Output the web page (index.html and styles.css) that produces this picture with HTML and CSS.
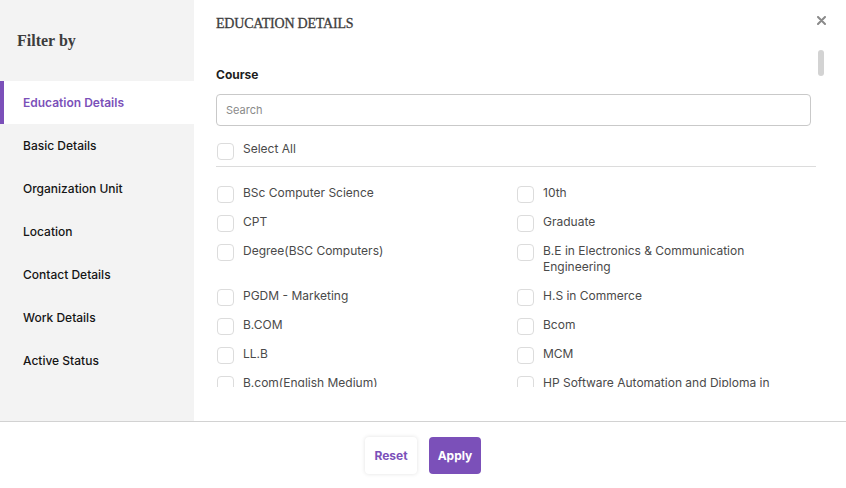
FILE: index.html
```html
<!DOCTYPE html>
<html>
<head>
<meta charset="utf-8">
<link rel="stylesheet" href="styles.css">
</head>
<body>
<div class="modal">
  <div class="top">
    <aside class="sidebar">
      <h2 class="filter-title">Filter by</h2>
      <ul class="nav">
        <li class="nav-item active">Education Details</li>
        <li class="nav-item">Basic Details</li>
        <li class="nav-item">Organization Unit</li>
        <li class="nav-item">Location</li>
        <li class="nav-item">Contact Details</li>
        <li class="nav-item">Work Details</li>
        <li class="nav-item">Active Status</li>
      </ul>
    </aside>
    <main class="main">
      <div class="main-head">
        <h1 class="section-title">EDUCATION DETAILS</h1>
        <button class="close" aria-label="Close">
          <svg width="9" height="9" viewBox="0 0 9 9"><path d="M1 1 L8 8 M8 1 L1 8" stroke="#8a8a8a" stroke-width="2" stroke-linecap="round"/></svg>
        </button>
      </div>
      <div class="scroll">
        <div class="field-label">Course</div>
        <input class="search" type="text" placeholder="Search">
        <label class="check-row select-all"><span class="box"></span><span class="label">Select All</span></label>
        <div class="options">
          <label class="check-row"><span class="box"></span><span class="label">BSc Computer Science</span></label>
          <label class="check-row"><span class="box"></span><span class="label">10th</span></label>
          <label class="check-row"><span class="box"></span><span class="label">CPT</span></label>
          <label class="check-row"><span class="box"></span><span class="label">Graduate</span></label>
          <label class="check-row"><span class="box"></span><span class="label">Degree(BSC Computers)</span></label>
          <label class="check-row"><span class="box"></span><span class="label">B.E in Electronics &amp; Communication Engineering</span></label>
          <label class="check-row"><span class="box"></span><span class="label">PGDM - Marketing</span></label>
          <label class="check-row"><span class="box"></span><span class="label">H.S in Commerce</span></label>
          <label class="check-row"><span class="box"></span><span class="label">B.COM</span></label>
          <label class="check-row"><span class="box"></span><span class="label">Bcom</span></label>
          <label class="check-row"><span class="box"></span><span class="label">LL.B</span></label>
          <label class="check-row"><span class="box"></span><span class="label">MCM</span></label>
          <label class="check-row"><span class="box"></span><span class="label">B.com(English Medium)</span></label>
          <label class="check-row"><span class="box"></span><span class="label">HP Software Automation and Diploma in Testing</span></label>
        </div>
      </div>
      <div class="thumb"></div>
    </main>
  </div>
  <footer class="footer">
    <button class="btn btn-reset">Reset</button>
    <button class="btn btn-apply">Apply</button>
  </footer>
</div>
</body>
</html>
```
FILE: styles.css
```css
* { box-sizing: border-box; }
html, body { margin: 0; padding: 0; }
body {
  width: 846px;
  height: 488px;
  overflow: hidden;
  background: #fff;
  font-family: Inter, "Noto Sans", sans-serif;
  color: #222;
}
.modal {
  display: flex;
  flex-direction: column;
  height: 488px;
}
.top {
  display: flex;
  height: 422px;
  border-bottom: 1px solid #d2d2d2;
}
.sidebar {
  width: 194px;
  flex: none;
  background: #f3f3f3;
  padding-top: 31px;
}
.filter-title {
  margin: 0 0 30px 17px;
  font-family: "Liberation Serif", "DejaVu Serif", serif;
  font-size: 16px;
  font-weight: 700;
  line-height: 20px;
  color: #3d3d3d;
}
.nav { list-style: none; margin: 0; padding: 0; }
.nav-item {
  height: 43px;
  display: flex;
  align-items: center;
  padding-left: 23px;
  font-size: 12px;
  font-weight: 500;
  color: #151515;
}
.nav-item.active {
  background: #fff;
  color: #7b50b9;
  font-weight: 600;
  border-left: 4px solid #7b50b9;
  padding-left: 19px;
}
.main {
  flex: 1;
  position: relative;
  padding-left: 22px;
}
.main-head {
  height: 46px;
  display: flex;
  align-items: flex-start;
  justify-content: space-between;
  padding-top: 15px;
}
.section-title {
  margin: 0;
  font-family: "Liberation Serif", "DejaVu Serif", serif;
  font-size: 14px;
  font-weight: 400;
  letter-spacing: -0.2px;
  -webkit-text-stroke: 0.3px #3d3d3d;
  line-height: 18px;
  color: #3d3d3d;
}
.close {
  border: 0;
  background: none;
  padding: 0;
  margin: 1px 20px 0 0;
  width: 9px;
  height: 9px;
  display: flex;
}
.scroll {
  height: 341px;
  overflow: hidden;
  width: 600px;
  padding-top: 21px;
}
.field-label {
  font-size: 12px;
  font-weight: 700;
  line-height: 16px;
  color: #1e1e1e;
}
.search {
  display: block;
  margin-top: 11px;
  width: 595px;
  height: 32px;
  border: 1px solid #c9c9c9;
  border-radius: 4px;
  padding: 0 9px;
  font-family: inherit;
  font-size: 11px;
  color: #333;
  outline: none;
}
.search::placeholder { color: #8a8a8a; }
.check-row {
  display: flex;
  align-items: flex-start;
  gap: 9px;
  font-size: 12px;
  line-height: 16px;
  color: #4a4a4a;
}
.box {
  flex: none;
  width: 17px;
  height: 17px;
  margin-left: 1px;
  margin-top: 1px;
  margin-bottom: -2px;
  border: 1px solid #dcdcdc;
  border-radius: 4px;
  background: #fff;
}
.select-all {
  margin-top: 15px;
  padding-bottom: 8px;
  border-bottom: 1px solid #dcdcdc;
}
.select-all .box { margin-top: 2px; }
.options {
  display: grid;
  grid-template-columns: 300px 300px;
  row-gap: 13px;
  padding-top: 18px;
}
.options .label { padding-right: 30px; }
.thumb {
  position: absolute;
  right: 22px;
  top: 50px;
  width: 6px;
  height: 26px;
  border-radius: 3px;
  background: #d3d3d3;
}
.footer {
  flex: 1;
  display: flex;
  justify-content: center;
  align-items: center;
  gap: 12px;
}
.btn {
  width: 52px;
  height: 37px;
  border: 0;
  border-radius: 4px;
  font-family: inherit;
  font-size: 12px;
  font-weight: 700;
  padding: 0;
}
.btn-reset {
  background: #fff;
  color: #7b50b9;
  box-shadow: 0 0 4px rgba(0,0,0,0.12);
}
.btn-apply {
  background: #7b50b9;
  color: #fff;
}
```
